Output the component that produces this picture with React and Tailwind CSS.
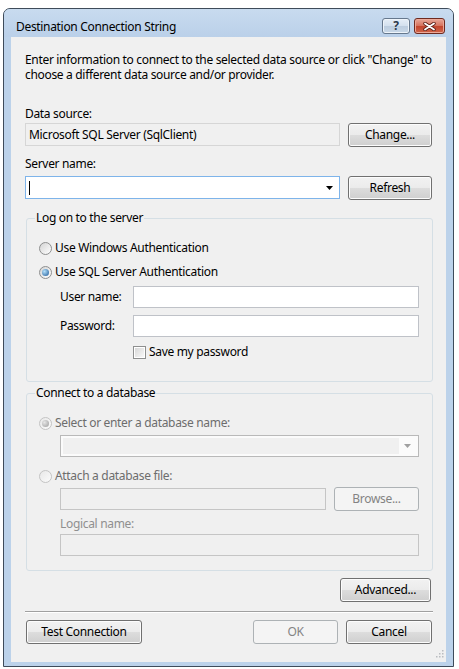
import React from 'react';

const btn =
  'flex items-center justify-center rounded-[3px] border border-[#707070] bg-[linear-gradient(#f2f2f2_0%,#ebebeb_50%,#dddddd_50%,#cfcfcf_100%)] shadow-[inset_0_0_0_1px_#fcfcfc] text-black';
const btnOff =
  'flex items-center justify-center rounded-[3px] border border-[#adb2b5] bg-[#f4f4f4] text-[#838383]';

const Radio = ({ checked, disabled }) => (
  <span
    className={`flex items-center justify-center w-[13px] h-[13px] rounded-full border shrink-0 ${
      disabled
        ? 'border-[#c4c4c4] bg-[linear-gradient(135deg,#e8e8e8,#fbfbfb)]'
        : 'border-[#8e8f8f] bg-[linear-gradient(135deg,#d4d4d4,#ffffff)]'
    }`}
  >
    {checked && (
      <span
        className={`w-[7px] h-[7px] rounded-full ${
          disabled
            ? 'bg-[radial-gradient(circle_at_35%_35%,#e6e6e6,#9c9c9c)]'
            : 'bg-[radial-gradient(circle_at_35%_35%,#b4e0fb,#1c5896)]'
        }`}
      />
    )}
  </span>
);

const Checkbox = () => (
  <span className="flex items-center justify-center w-[13px] h-[13px] border border-[#8e8f8f] bg-white shrink-0">
    <span className="w-[9px] h-[9px] bg-[linear-gradient(135deg,#d8d8d8,#f8f8f8)]" />
  </span>
);

const Arrow = ({ disabled }) => (
  <svg width="7" height="4" viewBox="0 0 7 4">
    <path d="M0 0h7L3.5 4z" fill={disabled ? '#a0a0a0' : '#000'} />
  </svg>
);

const Group = ({ title, height, children }) => (
  <div
    className={`relative ml-[15px] w-[407px] rounded-[3px] border border-[#d5dfe5] flex flex-col pt-[21px] ${height}`}
  >
    <span className="absolute -top-[9px] left-[8px] px-[1px] bg-[#f0f0f0] leading-[16px]">{title}</span>
    {children}
  </div>
);

export default function App() {
  return (
    <div className="bg-white pt-[8px] pl-[3px] min-h-[669px] font-['Noto_Sans',sans-serif] text-[12px] tracking-[-0.32px] text-black">
      <div className="w-[451px] h-[659px] rounded-t-[7px] border border-[#3e4b5a] bg-[#bcd2ea] flex flex-col">
        {/* title bar */}
        <div className="h-[28px] flex items-start rounded-t-[6px] bg-[linear-gradient(#c8dbef,#bad0e9)]">
          <span className="ml-[12px] mt-[10px] leading-[16px]">Destination Connection String</span>
          <div className="ml-auto mr-[8px] mt-[9px] flex gap-[4px]">
            <span className="w-[28px] h-[16px] rounded-[3px] border border-[#66788d] bg-[linear-gradient(#e6eef7_0%,#d3e0ee_50%,#bccddf_50%,#c9d8e8_100%)] shadow-[inset_0_0_0_1px_#eef4fa] flex items-center justify-center text-[12px] font-bold leading-none text-[#2c3a4a] tracking-normal">
              ?
            </span>
            <span className="w-[31px] h-[16px] rounded-[3px] border border-[#6e2a20] bg-[linear-gradient(#e8a798_0%,#d5715c_50%,#c2442c_50%,#d0654b_100%)] shadow-[inset_0_0_0_1px_#eca999] flex items-center justify-center">
              <svg width="13" height="9" viewBox="0 0 13 9">
                <path d="M2 1.5L11 7.5M11 1.5L2 7.5" stroke="#5a1d14" strokeWidth="3.4" strokeLinecap="round" />
                <path d="M2 1.5L11 7.5M11 1.5L2 7.5" stroke="#fff" strokeWidth="1.8" strokeLinecap="round" />
              </svg>
            </span>
          </div>
        </div>

        {/* client area */}
        <div className="relative ml-[7px] w-[435px] h-[625px] bg-[#f0f0f0] flex flex-col">
          <div className="mt-[15px] px-[14px] leading-[15px] whitespace-nowrap">
            <div>Enter information to connect to the selected data source or click "Change" to</div>
            <div>choose a different data source and/or provider.</div>
          </div>

          <div className="mt-[24px] px-[14px] leading-[15px]">Data source:</div>
          <div className="mt-[2px] ml-[14px] flex gap-[8px] items-start">
            <div className="w-[315px] h-[23px] border border-[#d6d6d6] bg-[#f0f0f0] flex items-center pl-[3px]">
              Microsoft SQL Server (SqlClient)
            </div>
            <button className={`${btn} w-[84px] h-[24px]`}>Change...</button>
          </div>

          <div className="mt-[9px] px-[14px] leading-[15px]">Server name:</div>
          <div className="mt-[5px] ml-[14px] flex gap-[8px] items-start">
            <div className="w-[315px] h-[23px] border border-[#7eb4ea] bg-white flex items-center pl-[3px] pr-[6px]">
              <span className="w-px h-[14px] bg-black" />
              <span className="ml-auto flex">
                <Arrow />
              </span>
            </div>
            <button className={`${btn} w-[84px] h-[24px]`}>Refresh</button>
          </div>

          {/* log on group */}
          <div className="mt-[18px]">
            <Group title="Log on to the server" height="h-[164px]">
              <div className="h-[16px] pl-[12px] flex items-center gap-[3px]">
                <Radio />
                <span>Use Windows Authentication</span>
              </div>
              <div className="mt-[8px] h-[16px] pl-[12px] flex items-center gap-[3px]">
                <Radio checked />
                <span>Use SQL Server Authentication</span>
              </div>
              <div className="mt-[6px] h-[22px] pl-[33px] flex items-center">
                <span className="w-[73px]">User name:</span>
                <span className="w-[286px] h-[22px] border border-[#bfc2c8] bg-white" />
              </div>
              <div className="mt-[7px] h-[22px] pl-[33px] flex items-center">
                <span className="w-[73px]">Password:</span>
                <span className="w-[286px] h-[22px] border border-[#bfc2c8] bg-white" />
              </div>
              <div className="mt-[7px] h-[16px] pl-[106px] flex items-center gap-[3px]">
                <Checkbox />
                <span>Save my password</span>
              </div>
            </Group>
          </div>

          {/* connect group */}
          <div className="mt-[11px] text-[#6d6d6d]">
            <Group title={<span className="text-black">Connect to a database</span>} height="h-[178px]">
              <div className="h-[16px] pl-[12px] flex items-center gap-[3px]">
                <Radio checked disabled />
                <span>Select or enter a database name:</span>
              </div>
              <div className="mt-[4px] ml-[33px] w-[359px] h-[22px] border border-[#b9b9b9] bg-[#fbfbfb] flex items-center p-[2px]">
                <span className="flex-1 h-full bg-[#f0f0f0]" />
                <span className="w-[17px] flex justify-center">
                  <Arrow disabled />
                </span>
              </div>
              <div className="mt-[11px] h-[16px] pl-[12px] flex items-center gap-[3px]">
                <Radio disabled />
                <span>Attach a database file:</span>
              </div>
              <div className="mt-[3px] h-[24px] pl-[33px] flex items-center gap-[8px]">
                <span className="w-[266px] h-[22px] border border-[#c5c5c5] bg-[#f0f0f0]" />
                <button className={`${btnOff} w-[85px] h-[24px]`}>Browse...</button>
              </div>
              <div className="mt-[5px] h-[16px] pl-[33px] flex items-center text-[#8f8f8f]">Logical name:</div>
              <span className="mt-[2px] ml-[33px] w-[359px] h-[22px] border border-[#c5c5c5] bg-[#f0f0f0]" />
            </Group>
          </div>

          <div className="mt-[7px] mr-[15px] self-end">
            <button className={`${btn} w-[91px] h-[24px]`}>Advanced...</button>
          </div>

          <div className="mt-[9px] ml-[14px] w-[408px] border-t border-b border-t-[#a0a0a0] border-b-white" />

          <div className="mt-[7px] ml-[15px] mr-[14px] flex items-start">
            <button className={`${btn} w-[116px] h-[24px]`}>Test Connection</button>
            <button className={`${btnOff} ml-auto w-[85px] h-[24px]`}>OK</button>
            <button className={`${btn} ml-[8px] w-[86px] h-[24px]`}>Cancel</button>
          </div>

          <svg className="absolute bottom-[4px] right-[2px]" width="8" height="8" viewBox="0 0 8 8">
            <g fill="#b9bcc0">
              <rect x="6" y="0" width="1.5" height="1.5" />
              <rect x="3" y="3" width="1.5" height="1.5" />
              <rect x="6" y="3" width="1.5" height="1.5" />
              <rect x="0" y="6" width="1.5" height="1.5" />
              <rect x="3" y="6" width="1.5" height="1.5" />
              <rect x="6" y="6" width="1.5" height="1.5" />
            </g>
          </svg>
        </div>
      </div>
    </div>
  );
}
